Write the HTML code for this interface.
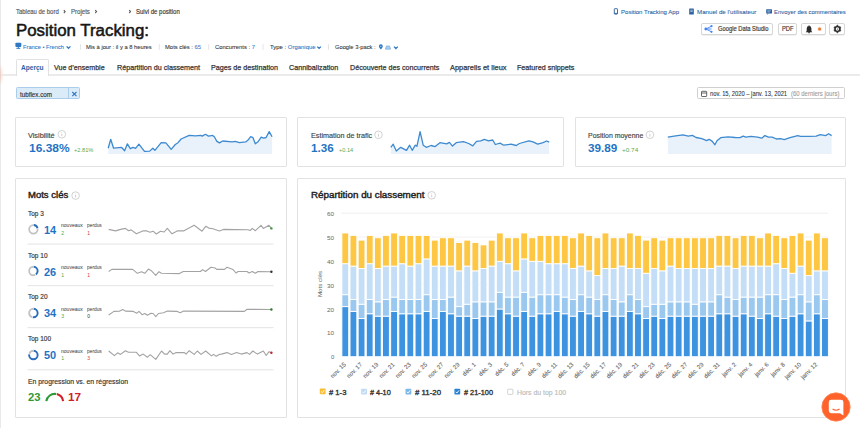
<!DOCTYPE html>
<html><head><meta charset="utf-8"><style>
html,body{margin:0;padding:0;background:#fff;}
#root{position:relative;width:860px;height:428px;overflow:hidden;background:#fff;font-family:"Liberation Sans", sans-serif;}
.t{position:absolute;white-space:nowrap;line-height:1;transform-origin:0 0;}
.box{position:absolute;box-sizing:border-box;}
svg{position:absolute;left:0;top:0;}
svg text{font-family:"Liberation Sans", sans-serif;}
</style></head><body><div id="root">
<div class="box" style="left:0;top:0;width:1.3px;height:428px;background:#e9e9e9"></div><div class="box" style="left:-4px;top:64px;width:8px;height:22px;border-radius:50%;background:radial-gradient(closest-side,rgba(240,150,120,0.35),rgba(240,150,120,0))"></div>
<div class="box" style="left:1.3px;top:74.2px;width:860px;height:1.8px;background:#ebebeb"></div>
<div class="box" style="left:15.5px;top:59.3px;width:33px;height:16.5px;background:#fff;border:1px solid #e2e2e2;border-bottom:none;border-radius:2px 2px 0 0"></div>
<div class="box" style="left:700.5px;top:22.8px;width:72.6px;height:12.4px;border:1px solid #d6d6d6;border-radius:2px;background:#fff;box-shadow:0 0.6px 0 #e2e2e2"></div>
<div class="box" style="left:777.5px;top:22.8px;width:19.2px;height:12.4px;border:1px solid #d6d6d6;border-radius:2px;background:#fff;box-shadow:0 0.6px 0 #e2e2e2"></div>
<div class="box" style="left:801px;top:22.8px;width:24.6px;height:12.4px;border:1px solid #d6d6d6;border-radius:2px;background:#fff;box-shadow:0 0.6px 0 #e2e2e2"></div>
<div class="box" style="left:829.3px;top:22.8px;width:16.2px;height:12.4px;border:1px solid #d6d6d6;border-radius:2px;background:#fff;box-shadow:0 0.6px 0 #e2e2e2"></div>
<div class="box" style="left:16px;top:87.4px;width:64px;height:12.1px;border:1px solid #a9cdea;border-radius:1.5px;background:#dcebf8"></div>
<div class="box" style="left:68px;top:87.4px;width:1px;height:12.1px;background:#a9cdea"></div>
<div class="box" style="left:697.4px;top:87.4px;width:147.9px;height:12.1px;border:1px solid #cfcfcf;border-radius:1.5px;background:#fff"></div>
<div class="box" style="left:14.75px;top:117.15px;width:271.8px;height:50.3px;border:1.3px solid #e2e2e2;border-radius:1px"></div>
<div class="box" style="left:297.25px;top:117.15px;width:266.4px;height:50.3px;border:1.3px solid #e2e2e2;border-radius:1px"></div>
<div class="box" style="left:574.55px;top:117.15px;width:271.3px;height:50.3px;border:1.3px solid #e2e2e2;border-radius:1px"></div>
<div class="box" style="left:14.75px;top:178.25px;width:271.8px;height:239.7px;border:1.3px solid #e2e2e2;border-radius:1px"></div>
<div class="box" style="left:297.25px;top:178.25px;width:548.6px;height:239.7px;border:1.3px solid #e2e2e2;border-radius:1px"></div>
<svg width="860" height="428" viewBox="0 0 860 428">
<path d="M63.8,10.1 L65.14999999999999,11.6 L63.8,13.1" fill="none" stroke="#555" stroke-width="1.05"/>
<path d="M95.2,10.1 L96.55,11.6 L95.2,13.1" fill="none" stroke="#555" stroke-width="1.05"/>
<path d="M129.2,10.1 L130.54999999999998,11.6 L129.2,13.1" fill="none" stroke="#555" stroke-width="1.05"/>
<rect x="15.4" y="42.7" width="5.9" height="4.3" rx="0.9" fill="#2f78c4"/><path d="M16.4,48.3 h3.9" stroke="#2f78c4" stroke-width="1"/><path d="M18.35,46.8 v1.4" stroke="#2f78c4" stroke-width="0.9"/>
<path d="M66.6,46.4 L68.5,48.3 L70.39999999999999,46.4" fill="none" stroke="#2f78c4" stroke-width="1.3"/>
<line x1="80.5" y1="44.2" x2="80.5" y2="49.8" stroke="#ddd" stroke-width="0.8"/>
<line x1="159.3" y1="44.2" x2="159.3" y2="49.8" stroke="#ddd" stroke-width="0.8"/>
<line x1="208.7" y1="44.2" x2="208.7" y2="49.8" stroke="#ddd" stroke-width="0.8"/>
<line x1="263" y1="44.2" x2="263" y2="49.8" stroke="#ddd" stroke-width="0.8"/>
<line x1="328.5" y1="44.2" x2="328.5" y2="49.8" stroke="#ddd" stroke-width="0.8"/>
<path d="M317.3,46.6 L319.1,48.4 L320.90000000000003,46.6" fill="none" stroke="#2f78c4" stroke-width="1.3"/>
<path d="M380.85,49.6 C379,47.4 378.9,46.7 378.9,46.3 A1.95,1.95 0 1 1 382.8,46.3 C382.8,46.7 382.7,47.4 380.85,49.6 Z" fill="#2f78c4"/><circle cx="380.85" cy="46.3" r="0.6" fill="#cfe3f7"/>
<path d="M385.3,49.2 L386.4,45.9 H389.5 L390.6,49.2 Z" fill="#a9cdef" stroke="#5b9ad6" stroke-width="0.5"/>
<path d="M394,46.6 L395.9,48.5 L397.8,46.6" fill="none" stroke="#2f78c4" stroke-width="1.3"/>
<rect x="614.3" y="8.7" width="3.2" height="5.4" rx="0.5" fill="none" stroke="#2a619f" stroke-width="0.9"/><path d="M614.3,13.4 h3.2" stroke="#2a619f" stroke-width="0.9"/>
<rect x="689.2" y="8.6" width="4.6" height="5.8" rx="0.5" fill="#2a619f"/><path d="M690.3,10.2 h2.4 M690.3,11.6 h2.4" stroke="#fff" stroke-width="0.6"/>
<rect x="766.2" y="9.2" width="5.8" height="4.4" rx="0.5" fill="#2a619f"/><path d="M767.2,13.4 l0,1.4 l1.5,-1.4z" fill="#2a619f"/><path d="M767.3,10.8 h3.6 M767.3,12 h2.6" stroke="#fff" stroke-width="0.5"/>
<circle cx="705.8" cy="29" r="1.4" fill="#4285f4"/><circle cx="711.5" cy="26.2" r="1.1" fill="#4285f4"/><circle cx="711.5" cy="31.8" r="1.1" fill="#4285f4"/><path d="M705.8,29 L711.5,26.2 M705.8,29 L711.5,31.8 M705.8,29 H711.5" stroke="#4285f4" stroke-width="0.9"/>
<path d="M805.8,32.2 L806.7,31 V28.4 A2.35,2.35 0 0 1 811.4,28.4 V31 L812.3,32.2 Z" fill="#2b2b2b"/><circle cx="809.05" cy="25.8" r="0.55" fill="#2b2b2b"/><circle cx="809.05" cy="32.6" r="0.8" fill="#2b2b2b"/><circle cx="819.6" cy="29" r="2.2" fill="#fbe3d3"/><circle cx="819.6" cy="29" r="1.5" fill="#e8762f"/>
<path d="M837.40,25.10 L838.85,26.49 L840.78,27.05 L840.30,29.00 L840.78,30.95 L838.85,31.51 L837.40,32.90 L835.95,31.51 L834.02,30.95 L834.50,29.00 L834.02,27.05 L835.95,26.49 Z" fill="#2b2b2b" stroke="#2b2b2b" stroke-width="0.6" stroke-linejoin="round"/><circle cx="837.4" cy="29" r="1.65" fill="#fff"/><circle cx="837.4" cy="29" r="0.6" fill="#2b2b2b"/>
<path d="M72.3,92 L76.5,96.2 M76.5,92 L72.3,96.2" stroke="#2f78c4" stroke-width="1.1"/>
<rect x="701.5" y="91.3" width="5.2" height="5.2" rx="0.6" fill="none" stroke="#555" stroke-width="0.9"/><path d="M701.5,93 h5.2" stroke="#555" stroke-width="0.9"/>
<circle cx="61.8" cy="134.3" r="3.8" fill="none" stroke="#c6c6c6" stroke-width="0.8"/><path d="M61.8,133.70000000000002 V136.20000000000002" stroke="#bbb" stroke-width="0.7"/><circle cx="61.8" cy="132.60000000000002" r="0.4" fill="#bbb"/>
<circle cx="378.5" cy="134.8" r="3.8" fill="none" stroke="#c6c6c6" stroke-width="0.8"/><path d="M378.5,134.20000000000002 V136.70000000000002" stroke="#bbb" stroke-width="0.7"/><circle cx="378.5" cy="133.10000000000002" r="0.4" fill="#bbb"/>
<circle cx="649.9" cy="134.8" r="3.8" fill="none" stroke="#c6c6c6" stroke-width="0.8"/><path d="M649.9,134.20000000000002 V136.70000000000002" stroke="#bbb" stroke-width="0.7"/><circle cx="649.9" cy="133.10000000000002" r="0.4" fill="#bbb"/>
<circle cx="75.6" cy="195.6" r="3.8" fill="none" stroke="#c6c6c6" stroke-width="0.8"/><path d="M75.6,195.0 V197.5" stroke="#bbb" stroke-width="0.7"/><circle cx="75.6" cy="193.9" r="0.4" fill="#bbb"/>
<circle cx="431.7" cy="195.3" r="3.8" fill="none" stroke="#c6c6c6" stroke-width="0.8"/><path d="M431.7,194.70000000000002 V197.20000000000002" stroke="#bbb" stroke-width="0.7"/><circle cx="431.7" cy="193.60000000000002" r="0.4" fill="#bbb"/>
<path d="M108.2,148.2 L110.7,139.3 L113.6,148.2 L121.5,147.3 L124.6,150.8 L127.4,143.8 L130.3,148.7 L133.0,147.3 L135.6,148.4 L138.9,144.2 L144.5,151.3 L149.7,151.1 L152.8,148.2 L154.9,150.3 L161.2,142.7 L165.9,142.9 L171.2,149.4 L175.3,144.5 L178.0,142.7 L181.1,139.0 L189.2,135.4 L195.5,135.8 L200.7,135.4 L202.3,136.1 L205.4,134.3 L208.5,136.1 L212.7,135.4 L214.3,136.7 L216.9,141.4 L219.5,142.9 L222.7,141.0 L232.1,141.9 L235.2,141.4 L239.4,142.7 L245.7,141.9 L247.8,140.3 L250.7,136.7 L253.0,137.7 L255.3,143.8 L258.3,141.4 L261.2,137.2 L263.5,138.2 L266.1,137.5 L269.2,131.6 L272.1,136.7 L272.1,153.9 L108.2,153.9 Z" fill="#e9f2fb"/><path d="M108.2,148.2 L110.7,139.3 L113.6,148.2 L121.5,147.3 L124.6,150.8 L127.4,143.8 L130.3,148.7 L133.0,147.3 L135.6,148.4 L138.9,144.2 L144.5,151.3 L149.7,151.1 L152.8,148.2 L154.9,150.3 L161.2,142.7 L165.9,142.9 L171.2,149.4 L175.3,144.5 L178.0,142.7 L181.1,139.0 L189.2,135.4 L195.5,135.8 L200.7,135.4 L202.3,136.1 L205.4,134.3 L208.5,136.1 L212.7,135.4 L214.3,136.7 L216.9,141.4 L219.5,142.9 L222.7,141.0 L232.1,141.9 L235.2,141.4 L239.4,142.7 L245.7,141.9 L247.8,140.3 L250.7,136.7 L253.0,137.7 L255.3,143.8 L258.3,141.4 L261.2,137.2 L263.5,138.2 L266.1,137.5 L269.2,131.6 L272.1,136.7" fill="none" stroke="#3d8ad0" stroke-width="1.3" stroke-linejoin="round"/>
<path d="M390.8,147.3 L393.2,144.2 L396.3,151.1 L400.7,147.3 L406.5,150.3 L409.6,145.2 L412.2,150.3 L415.3,145.2 L416.9,146.3 L420.1,131.6 L423.2,145.2 L426.3,147.3 L431.0,145.5 L435.2,146.6 L439.9,142.7 L446.7,143.8 L449.4,142.4 L452.5,146.1 L456.2,142.7 L463.5,141.7 L468.7,143.5 L472.8,145.9 L476.5,141.4 L480.7,140.8 L484.4,139.3 L488.5,140.8 L492.7,140.0 L495.3,144.5 L500.1,143.1 L503.7,145.2 L511.0,144.2 L516.3,145.5 L519.4,143.5 L528.8,140.8 L533.0,141.9 L537.7,144.2 L543.0,142.7 L546.6,141.0 L549.2,142.1 L549.2,153.9 L390.8,153.9 Z" fill="#e9f2fb"/><path d="M390.8,147.3 L393.2,144.2 L396.3,151.1 L400.7,147.3 L406.5,150.3 L409.6,145.2 L412.2,150.3 L415.3,145.2 L416.9,146.3 L420.1,131.6 L423.2,145.2 L426.3,147.3 L431.0,145.5 L435.2,146.6 L439.9,142.7 L446.7,143.8 L449.4,142.4 L452.5,146.1 L456.2,142.7 L463.5,141.7 L468.7,143.5 L472.8,145.9 L476.5,141.4 L480.7,140.8 L484.4,139.3 L488.5,140.8 L492.7,140.0 L495.3,144.5 L500.1,143.1 L503.7,145.2 L511.0,144.2 L516.3,145.5 L519.4,143.5 L528.8,140.8 L533.0,141.9 L537.7,144.2 L543.0,142.7 L546.6,141.0 L549.2,142.1" fill="none" stroke="#3d8ad0" stroke-width="1.3" stroke-linejoin="round"/>
<path d="M667.8,137.2 L675.7,135.8 L683.0,134.8 L688.3,136.1 L692.4,135.4 L696.1,137.5 L701.9,138.7 L706.6,140.6 L709.2,139.3 L712.3,141.4 L714.9,144.8 L717.0,140.8 L720.7,137.7 L728.0,136.9 L735.3,137.5 L740.0,137.7 L743.2,136.1 L745.8,137.2 L750.8,136.4 L757.6,137.2 L761.7,138.2 L764.9,135.6 L768.5,137.2 L772.2,137.2 L776.4,139.0 L780.6,138.7 L784.2,139.6 L790.0,137.7 L797.8,135.6 L800.5,136.4 L808.8,136.4 L816.2,136.1 L820.3,134.6 L825.6,135.6 L828.7,133.7 L831.6,135.6 L831.6,153.9 L667.8,153.9 Z" fill="#e9f2fb"/><path d="M667.8,137.2 L675.7,135.8 L683.0,134.8 L688.3,136.1 L692.4,135.4 L696.1,137.5 L701.9,138.7 L706.6,140.6 L709.2,139.3 L712.3,141.4 L714.9,144.8 L717.0,140.8 L720.7,137.7 L728.0,136.9 L735.3,137.5 L740.0,137.7 L743.2,136.1 L745.8,137.2 L750.8,136.4 L757.6,137.2 L761.7,138.2 L764.9,135.6 L768.5,137.2 L772.2,137.2 L776.4,139.0 L780.6,138.7 L784.2,139.6 L790.0,137.7 L797.8,135.6 L800.5,136.4 L808.8,136.4 L816.2,136.1 L820.3,134.6 L825.6,135.6 L828.7,133.7 L831.6,135.6" fill="none" stroke="#3d8ad0" stroke-width="1.3" stroke-linejoin="round"/>
<rect x="27.5" y="243.5" width="246" height="1.2" fill="#e8e8e8"/>
<rect x="27.5" y="285.0" width="246" height="1.2" fill="#e8e8e8"/>
<rect x="27.5" y="327.0" width="246" height="1.2" fill="#e8e8e8"/>
<rect x="27.5" y="369.2" width="246" height="1.2" fill="#e8e8e8"/>
<path d="M108.7,229.4 L115.5,230.9 L120.7,229.4 L125.4,228.4 L128.5,230.7 L131.2,229.9 L136.4,233.8 L142.7,230.9 L146.9,230.9 L150.0,232.3 L153.1,231.2 L156.3,234.0 L160.5,231.2 L164.1,232.0 L167.3,228.4 L172.0,233.8 L177.2,230.9 L183.5,230.9 L190.0,227.6 L194.2,225.3 L202.0,231.2 L205.7,226.3 L208.8,228.1 L213.0,228.8 L219.3,230.9 L223.5,229.4 L248.1,229.7 L250.2,230.5 L252.3,228.4 L255.4,230.7 L261.0,225.3 L263.3,228.4 L269.0,225.3 L271.4,228.4" fill="none" stroke="#a3a3a3" stroke-width="1.1" stroke-linejoin="round"/><circle cx="271.4" cy="228.4" r="1.2" fill="#3c9a3c"/>
<path d="M108.7,271.5 L111.8,269.4 L132.7,269.4 L137.4,273.3 L141.6,271.7 L144.8,273.3 L148.4,269.1 L151.0,270.4 L155.8,275.4 L158.9,271.7 L161.5,273.3 L179.3,273.6 L183.3,271.5 L200.5,271.5 L202.6,269.6 L205.5,271.5 L210.9,267.3 L215.1,268.0 L216.7,269.4 L224.5,269.4 L227.1,267.3 L232.9,269.4 L236.0,273.0 L238.1,271.5 L247.0,271.5 L249.1,273.0 L252.3,271.5 L255.4,273.3 L258.0,271.5 L271.4,271.7" fill="none" stroke="#a3a3a3" stroke-width="1.1" stroke-linejoin="round"/><circle cx="271.4" cy="271.7" r="1.2" fill="#333"/>
<path d="M108.7,315.0 L113.9,311.4 L119.7,311.1 L122.8,309.5 L125.4,311.1 L133.3,311.4 L136.9,313.2 L139.0,311.4 L142.1,314.7 L144.8,313.5 L147.4,315.3 L151.0,313.2 L153.1,313.5 L155.8,316.6 L158.4,313.5 L163.6,312.7 L167.3,311.1 L177.2,311.4 L180.3,312.7 L183.5,311.1 L244.4,311.4 L247.0,309.3 L271.4,309.5" fill="none" stroke="#a3a3a3" stroke-width="1.1" stroke-linejoin="round"/><circle cx="271.4" cy="309.5" r="1.2" fill="#2a7a2a"/>
<path d="M108.7,351.0 L114.4,355.7 L117.6,352.8 L120.5,354.4 L125.4,350.7 L128.5,352.3 L136.4,352.3 L139.5,355.9 L143.2,354.1 L147.4,357.3 L150.2,354.7 L155.8,359.4 L161.5,351.0 L164.6,354.1 L167.3,354.1 L169.9,350.7 L173.0,354.1 L176.2,352.6 L184.5,352.6 L186.1,354.1 L189.2,350.7 L194.2,354.4 L197.3,351.0 L201.0,354.4 L205.7,351.0 L211.5,355.9 L213.5,354.4 L216.2,356.2 L219.3,354.4 L221.4,354.1 L227.1,352.6 L231.3,354.4 L236.6,352.6 L241.3,354.1 L247.0,352.6 L249.6,354.4 L252.8,351.0 L257.5,354.1 L263.3,351.0 L266.2,355.5 L269.0,351.7 L271.4,352.8" fill="none" stroke="#a3a3a3" stroke-width="1.1" stroke-linejoin="round"/><circle cx="271.4" cy="352.8" r="1.2" fill="#c8242b"/>
<circle cx="33.4" cy="229.3" r="4.25" fill="none" stroke="#c2c2c2" stroke-width="1.8" stroke-dasharray="0 6.10 20.25 26.70" transform="rotate(-90 33.4 229.3)"/><circle cx="33.4" cy="229.3" r="4.25" fill="none" stroke="#2a6fbb" stroke-width="1.9" stroke-dasharray="0 0.35 5.05 26.70" transform="rotate(-90 33.4 229.3)"/>
<circle cx="33.4" cy="271" r="4.25" fill="none" stroke="#c2c2c2" stroke-width="1.8" stroke-dasharray="0 11.03 15.32 26.70" transform="rotate(-90 33.4 271)"/><circle cx="33.4" cy="271" r="4.25" fill="none" stroke="#2a6fbb" stroke-width="1.9" stroke-dasharray="0 0.35 9.98 26.70" transform="rotate(-90 33.4 271)"/>
<circle cx="33.4" cy="313" r="4.25" fill="none" stroke="#c2c2c2" stroke-width="1.8" stroke-dasharray="0 14.32 12.04 26.70" transform="rotate(-90 33.4 313)"/><circle cx="33.4" cy="313" r="4.25" fill="none" stroke="#2a6fbb" stroke-width="1.9" stroke-dasharray="0 0.35 13.27 26.70" transform="rotate(-90 33.4 313)"/>
<circle cx="33.4" cy="355" r="4.25" fill="none" stroke="#c2c2c2" stroke-width="1.8" stroke-dasharray="0 20.89 5.46 26.70" transform="rotate(-90 33.4 355)"/><circle cx="33.4" cy="355" r="4.25" fill="none" stroke="#2a6fbb" stroke-width="1.9" stroke-dasharray="0 0.35 19.84 26.70" transform="rotate(-90 33.4 355)"/>
<path d="M46.3,401.2 A8.52,8.52 0 0 1 56.2,394.0" fill="none" stroke="#2e9a35" stroke-width="2.1"/><path d="M56.9,394.1 A8.52,8.52 0 0 1 63.1,401.2" fill="none" stroke="#d0212a" stroke-width="2.1"/>
<line x1="341" y1="332.45" x2="828" y2="332.45" stroke="#ececec" stroke-width="0.8"/>
<line x1="341" y1="308.60" x2="828" y2="308.60" stroke="#ececec" stroke-width="0.8"/>
<line x1="341" y1="284.75" x2="828" y2="284.75" stroke="#ececec" stroke-width="0.8"/>
<line x1="341" y1="260.90" x2="828" y2="260.90" stroke="#ececec" stroke-width="0.8"/>
<line x1="341" y1="237.05" x2="828" y2="237.05" stroke="#ececec" stroke-width="0.8"/>
<line x1="341" y1="213.20" x2="828" y2="213.20" stroke="#ececec" stroke-width="0.8"/>
<rect x="341.90" y="306.62" width="6.8" height="50.08" fill="#3d93e0" stroke="#fff" stroke-width="0.9"/>
<rect x="341.90" y="294.69" width="6.8" height="11.93" fill="#9ac8ef" stroke="#fff" stroke-width="0.9"/>
<rect x="341.90" y="263.69" width="6.8" height="31.00" fill="#c3def6" stroke="#fff" stroke-width="0.9"/>
<rect x="341.90" y="232.98" width="6.8" height="30.70" fill="#fdc643" stroke="#fff" stroke-width="0.9"/>
<rect x="350.03" y="311.38" width="6.8" height="45.31" fill="#3d93e0" stroke="#fff" stroke-width="0.9"/>
<rect x="350.03" y="299.46" width="6.8" height="11.93" fill="#9ac8ef" stroke="#fff" stroke-width="0.9"/>
<rect x="350.03" y="266.07" width="6.8" height="33.39" fill="#c3def6" stroke="#fff" stroke-width="0.9"/>
<rect x="350.03" y="235.37" width="6.8" height="30.70" fill="#fdc643" stroke="#fff" stroke-width="0.9"/>
<rect x="358.16" y="318.54" width="6.8" height="38.16" fill="#3d93e0" stroke="#fff" stroke-width="0.9"/>
<rect x="358.16" y="304.23" width="6.8" height="14.31" fill="#9ac8ef" stroke="#fff" stroke-width="0.9"/>
<rect x="358.16" y="268.45" width="6.8" height="35.78" fill="#c3def6" stroke="#fff" stroke-width="0.9"/>
<rect x="358.16" y="240.13" width="6.8" height="28.32" fill="#fdc643" stroke="#fff" stroke-width="0.9"/>
<rect x="366.29" y="313.77" width="6.8" height="42.93" fill="#3d93e0" stroke="#fff" stroke-width="0.9"/>
<rect x="366.29" y="299.46" width="6.8" height="14.31" fill="#9ac8ef" stroke="#fff" stroke-width="0.9"/>
<rect x="366.29" y="263.69" width="6.8" height="35.77" fill="#c3def6" stroke="#fff" stroke-width="0.9"/>
<rect x="366.29" y="235.37" width="6.8" height="28.32" fill="#fdc643" stroke="#fff" stroke-width="0.9"/>
<rect x="374.42" y="316.15" width="6.8" height="40.55" fill="#3d93e0" stroke="#fff" stroke-width="0.9"/>
<rect x="374.42" y="301.84" width="6.8" height="14.31" fill="#9ac8ef" stroke="#fff" stroke-width="0.9"/>
<rect x="374.42" y="268.45" width="6.8" height="33.39" fill="#c3def6" stroke="#fff" stroke-width="0.9"/>
<rect x="374.42" y="237.75" width="6.8" height="30.70" fill="#fdc643" stroke="#fff" stroke-width="0.9"/>
<rect x="382.55" y="316.15" width="6.8" height="40.55" fill="#3d93e0" stroke="#fff" stroke-width="0.9"/>
<rect x="382.55" y="299.46" width="6.8" height="16.69" fill="#9ac8ef" stroke="#fff" stroke-width="0.9"/>
<rect x="382.55" y="266.07" width="6.8" height="33.39" fill="#c3def6" stroke="#fff" stroke-width="0.9"/>
<rect x="382.55" y="235.37" width="6.8" height="30.70" fill="#fdc643" stroke="#fff" stroke-width="0.9"/>
<rect x="390.68" y="311.38" width="6.8" height="45.31" fill="#3d93e0" stroke="#fff" stroke-width="0.9"/>
<rect x="390.68" y="297.07" width="6.8" height="14.31" fill="#9ac8ef" stroke="#fff" stroke-width="0.9"/>
<rect x="390.68" y="266.07" width="6.8" height="31.00" fill="#c3def6" stroke="#fff" stroke-width="0.9"/>
<rect x="390.68" y="232.98" width="6.8" height="33.09" fill="#fdc643" stroke="#fff" stroke-width="0.9"/>
<rect x="398.81" y="313.77" width="6.8" height="42.93" fill="#3d93e0" stroke="#fff" stroke-width="0.9"/>
<rect x="398.81" y="299.46" width="6.8" height="14.31" fill="#9ac8ef" stroke="#fff" stroke-width="0.9"/>
<rect x="398.81" y="263.69" width="6.8" height="35.77" fill="#c3def6" stroke="#fff" stroke-width="0.9"/>
<rect x="398.81" y="235.37" width="6.8" height="28.32" fill="#fdc643" stroke="#fff" stroke-width="0.9"/>
<rect x="406.94" y="313.77" width="6.8" height="42.93" fill="#3d93e0" stroke="#fff" stroke-width="0.9"/>
<rect x="406.94" y="299.46" width="6.8" height="14.31" fill="#9ac8ef" stroke="#fff" stroke-width="0.9"/>
<rect x="406.94" y="266.07" width="6.8" height="33.39" fill="#c3def6" stroke="#fff" stroke-width="0.9"/>
<rect x="406.94" y="235.37" width="6.8" height="30.70" fill="#fdc643" stroke="#fff" stroke-width="0.9"/>
<rect x="415.07" y="313.77" width="6.8" height="42.93" fill="#3d93e0" stroke="#fff" stroke-width="0.9"/>
<rect x="415.07" y="299.46" width="6.8" height="14.31" fill="#9ac8ef" stroke="#fff" stroke-width="0.9"/>
<rect x="415.07" y="263.69" width="6.8" height="35.77" fill="#c3def6" stroke="#fff" stroke-width="0.9"/>
<rect x="415.07" y="235.37" width="6.8" height="28.32" fill="#fdc643" stroke="#fff" stroke-width="0.9"/>
<rect x="423.20" y="311.38" width="6.8" height="45.31" fill="#3d93e0" stroke="#fff" stroke-width="0.9"/>
<rect x="423.20" y="294.69" width="6.8" height="16.69" fill="#9ac8ef" stroke="#fff" stroke-width="0.9"/>
<rect x="423.20" y="258.91" width="6.8" height="35.78" fill="#c3def6" stroke="#fff" stroke-width="0.9"/>
<rect x="423.20" y="235.37" width="6.8" height="23.55" fill="#fdc643" stroke="#fff" stroke-width="0.9"/>
<rect x="431.33" y="318.54" width="6.8" height="38.16" fill="#3d93e0" stroke="#fff" stroke-width="0.9"/>
<rect x="431.33" y="299.46" width="6.8" height="19.08" fill="#9ac8ef" stroke="#fff" stroke-width="0.9"/>
<rect x="431.33" y="266.07" width="6.8" height="33.39" fill="#c3def6" stroke="#fff" stroke-width="0.9"/>
<rect x="431.33" y="240.13" width="6.8" height="25.94" fill="#fdc643" stroke="#fff" stroke-width="0.9"/>
<rect x="439.46" y="311.38" width="6.8" height="45.31" fill="#3d93e0" stroke="#fff" stroke-width="0.9"/>
<rect x="439.46" y="299.46" width="6.8" height="11.93" fill="#9ac8ef" stroke="#fff" stroke-width="0.9"/>
<rect x="439.46" y="266.07" width="6.8" height="33.39" fill="#c3def6" stroke="#fff" stroke-width="0.9"/>
<rect x="439.46" y="237.75" width="6.8" height="28.32" fill="#fdc643" stroke="#fff" stroke-width="0.9"/>
<rect x="447.59" y="313.77" width="6.8" height="42.93" fill="#3d93e0" stroke="#fff" stroke-width="0.9"/>
<rect x="447.59" y="297.07" width="6.8" height="16.69" fill="#9ac8ef" stroke="#fff" stroke-width="0.9"/>
<rect x="447.59" y="266.07" width="6.8" height="31.00" fill="#c3def6" stroke="#fff" stroke-width="0.9"/>
<rect x="447.59" y="237.75" width="6.8" height="28.32" fill="#fdc643" stroke="#fff" stroke-width="0.9"/>
<rect x="455.72" y="316.15" width="6.8" height="40.55" fill="#3d93e0" stroke="#fff" stroke-width="0.9"/>
<rect x="455.72" y="306.62" width="6.8" height="9.54" fill="#9ac8ef" stroke="#fff" stroke-width="0.9"/>
<rect x="455.72" y="270.84" width="6.8" height="35.77" fill="#c3def6" stroke="#fff" stroke-width="0.9"/>
<rect x="455.72" y="242.52" width="6.8" height="28.32" fill="#fdc643" stroke="#fff" stroke-width="0.9"/>
<rect x="463.85" y="316.15" width="6.8" height="40.55" fill="#3d93e0" stroke="#fff" stroke-width="0.9"/>
<rect x="463.85" y="304.23" width="6.8" height="11.92" fill="#9ac8ef" stroke="#fff" stroke-width="0.9"/>
<rect x="463.85" y="266.07" width="6.8" height="38.16" fill="#c3def6" stroke="#fff" stroke-width="0.9"/>
<rect x="463.85" y="240.13" width="6.8" height="25.94" fill="#fdc643" stroke="#fff" stroke-width="0.9"/>
<rect x="471.98" y="318.54" width="6.8" height="38.16" fill="#3d93e0" stroke="#fff" stroke-width="0.9"/>
<rect x="471.98" y="301.84" width="6.8" height="16.69" fill="#9ac8ef" stroke="#fff" stroke-width="0.9"/>
<rect x="471.98" y="270.84" width="6.8" height="31.00" fill="#c3def6" stroke="#fff" stroke-width="0.9"/>
<rect x="471.98" y="242.52" width="6.8" height="28.32" fill="#fdc643" stroke="#fff" stroke-width="0.9"/>
<rect x="480.11" y="316.15" width="6.8" height="40.55" fill="#3d93e0" stroke="#fff" stroke-width="0.9"/>
<rect x="480.11" y="301.84" width="6.8" height="14.31" fill="#9ac8ef" stroke="#fff" stroke-width="0.9"/>
<rect x="480.11" y="268.45" width="6.8" height="33.39" fill="#c3def6" stroke="#fff" stroke-width="0.9"/>
<rect x="480.11" y="244.91" width="6.8" height="23.55" fill="#fdc643" stroke="#fff" stroke-width="0.9"/>
<rect x="488.24" y="316.15" width="6.8" height="40.55" fill="#3d93e0" stroke="#fff" stroke-width="0.9"/>
<rect x="488.24" y="301.84" width="6.8" height="14.31" fill="#9ac8ef" stroke="#fff" stroke-width="0.9"/>
<rect x="488.24" y="266.07" width="6.8" height="35.77" fill="#c3def6" stroke="#fff" stroke-width="0.9"/>
<rect x="488.24" y="240.13" width="6.8" height="25.94" fill="#fdc643" stroke="#fff" stroke-width="0.9"/>
<rect x="496.37" y="309.00" width="6.8" height="47.70" fill="#3d93e0" stroke="#fff" stroke-width="0.9"/>
<rect x="496.37" y="292.31" width="6.8" height="16.69" fill="#9ac8ef" stroke="#fff" stroke-width="0.9"/>
<rect x="496.37" y="261.30" width="6.8" height="31.00" fill="#c3def6" stroke="#fff" stroke-width="0.9"/>
<rect x="496.37" y="232.98" width="6.8" height="28.32" fill="#fdc643" stroke="#fff" stroke-width="0.9"/>
<rect x="504.50" y="313.77" width="6.8" height="42.93" fill="#3d93e0" stroke="#fff" stroke-width="0.9"/>
<rect x="504.50" y="297.07" width="6.8" height="16.69" fill="#9ac8ef" stroke="#fff" stroke-width="0.9"/>
<rect x="504.50" y="263.69" width="6.8" height="33.39" fill="#c3def6" stroke="#fff" stroke-width="0.9"/>
<rect x="504.50" y="237.75" width="6.8" height="25.94" fill="#fdc643" stroke="#fff" stroke-width="0.9"/>
<rect x="512.63" y="316.15" width="6.8" height="40.55" fill="#3d93e0" stroke="#fff" stroke-width="0.9"/>
<rect x="512.63" y="297.07" width="6.8" height="19.08" fill="#9ac8ef" stroke="#fff" stroke-width="0.9"/>
<rect x="512.63" y="270.84" width="6.8" height="26.23" fill="#c3def6" stroke="#fff" stroke-width="0.9"/>
<rect x="512.63" y="237.75" width="6.8" height="33.09" fill="#fdc643" stroke="#fff" stroke-width="0.9"/>
<rect x="520.76" y="311.38" width="6.8" height="45.31" fill="#3d93e0" stroke="#fff" stroke-width="0.9"/>
<rect x="520.76" y="292.31" width="6.8" height="19.08" fill="#9ac8ef" stroke="#fff" stroke-width="0.9"/>
<rect x="520.76" y="258.91" width="6.8" height="33.39" fill="#c3def6" stroke="#fff" stroke-width="0.9"/>
<rect x="520.76" y="232.98" width="6.8" height="25.93" fill="#fdc643" stroke="#fff" stroke-width="0.9"/>
<rect x="528.89" y="316.15" width="6.8" height="40.55" fill="#3d93e0" stroke="#fff" stroke-width="0.9"/>
<rect x="528.89" y="297.07" width="6.8" height="19.08" fill="#9ac8ef" stroke="#fff" stroke-width="0.9"/>
<rect x="528.89" y="261.30" width="6.8" height="35.77" fill="#c3def6" stroke="#fff" stroke-width="0.9"/>
<rect x="528.89" y="237.75" width="6.8" height="23.55" fill="#fdc643" stroke="#fff" stroke-width="0.9"/>
<rect x="537.02" y="313.77" width="6.8" height="42.93" fill="#3d93e0" stroke="#fff" stroke-width="0.9"/>
<rect x="537.02" y="294.69" width="6.8" height="19.08" fill="#9ac8ef" stroke="#fff" stroke-width="0.9"/>
<rect x="537.02" y="261.30" width="6.8" height="33.39" fill="#c3def6" stroke="#fff" stroke-width="0.9"/>
<rect x="537.02" y="235.37" width="6.8" height="25.94" fill="#fdc643" stroke="#fff" stroke-width="0.9"/>
<rect x="545.15" y="313.77" width="6.8" height="42.93" fill="#3d93e0" stroke="#fff" stroke-width="0.9"/>
<rect x="545.15" y="294.69" width="6.8" height="19.08" fill="#9ac8ef" stroke="#fff" stroke-width="0.9"/>
<rect x="545.15" y="263.69" width="6.8" height="31.00" fill="#c3def6" stroke="#fff" stroke-width="0.9"/>
<rect x="545.15" y="235.37" width="6.8" height="28.32" fill="#fdc643" stroke="#fff" stroke-width="0.9"/>
<rect x="553.28" y="311.38" width="6.8" height="45.31" fill="#3d93e0" stroke="#fff" stroke-width="0.9"/>
<rect x="553.28" y="294.69" width="6.8" height="16.69" fill="#9ac8ef" stroke="#fff" stroke-width="0.9"/>
<rect x="553.28" y="263.69" width="6.8" height="31.00" fill="#c3def6" stroke="#fff" stroke-width="0.9"/>
<rect x="553.28" y="235.37" width="6.8" height="28.32" fill="#fdc643" stroke="#fff" stroke-width="0.9"/>
<rect x="561.41" y="313.77" width="6.8" height="42.93" fill="#3d93e0" stroke="#fff" stroke-width="0.9"/>
<rect x="561.41" y="297.07" width="6.8" height="16.69" fill="#9ac8ef" stroke="#fff" stroke-width="0.9"/>
<rect x="561.41" y="263.69" width="6.8" height="33.39" fill="#c3def6" stroke="#fff" stroke-width="0.9"/>
<rect x="561.41" y="235.37" width="6.8" height="28.32" fill="#fdc643" stroke="#fff" stroke-width="0.9"/>
<rect x="569.54" y="316.15" width="6.8" height="40.55" fill="#3d93e0" stroke="#fff" stroke-width="0.9"/>
<rect x="569.54" y="299.46" width="6.8" height="16.69" fill="#9ac8ef" stroke="#fff" stroke-width="0.9"/>
<rect x="569.54" y="268.45" width="6.8" height="31.00" fill="#c3def6" stroke="#fff" stroke-width="0.9"/>
<rect x="569.54" y="237.75" width="6.8" height="30.70" fill="#fdc643" stroke="#fff" stroke-width="0.9"/>
<rect x="577.67" y="311.38" width="6.8" height="45.31" fill="#3d93e0" stroke="#fff" stroke-width="0.9"/>
<rect x="577.67" y="294.69" width="6.8" height="16.69" fill="#9ac8ef" stroke="#fff" stroke-width="0.9"/>
<rect x="577.67" y="266.07" width="6.8" height="28.62" fill="#c3def6" stroke="#fff" stroke-width="0.9"/>
<rect x="577.67" y="232.98" width="6.8" height="33.09" fill="#fdc643" stroke="#fff" stroke-width="0.9"/>
<rect x="585.80" y="313.77" width="6.8" height="42.93" fill="#3d93e0" stroke="#fff" stroke-width="0.9"/>
<rect x="585.80" y="297.07" width="6.8" height="16.69" fill="#9ac8ef" stroke="#fff" stroke-width="0.9"/>
<rect x="585.80" y="270.84" width="6.8" height="26.23" fill="#c3def6" stroke="#fff" stroke-width="0.9"/>
<rect x="585.80" y="235.37" width="6.8" height="35.48" fill="#fdc643" stroke="#fff" stroke-width="0.9"/>
<rect x="593.93" y="316.15" width="6.8" height="40.55" fill="#3d93e0" stroke="#fff" stroke-width="0.9"/>
<rect x="593.93" y="299.46" width="6.8" height="16.69" fill="#9ac8ef" stroke="#fff" stroke-width="0.9"/>
<rect x="593.93" y="275.61" width="6.8" height="23.85" fill="#c3def6" stroke="#fff" stroke-width="0.9"/>
<rect x="593.93" y="237.75" width="6.8" height="37.86" fill="#fdc643" stroke="#fff" stroke-width="0.9"/>
<rect x="602.06" y="311.38" width="6.8" height="45.31" fill="#3d93e0" stroke="#fff" stroke-width="0.9"/>
<rect x="602.06" y="294.69" width="6.8" height="16.69" fill="#9ac8ef" stroke="#fff" stroke-width="0.9"/>
<rect x="602.06" y="268.45" width="6.8" height="26.24" fill="#c3def6" stroke="#fff" stroke-width="0.9"/>
<rect x="602.06" y="232.98" width="6.8" height="35.47" fill="#fdc643" stroke="#fff" stroke-width="0.9"/>
<rect x="610.19" y="316.15" width="6.8" height="40.55" fill="#3d93e0" stroke="#fff" stroke-width="0.9"/>
<rect x="610.19" y="299.46" width="6.8" height="16.69" fill="#9ac8ef" stroke="#fff" stroke-width="0.9"/>
<rect x="610.19" y="268.45" width="6.8" height="31.00" fill="#c3def6" stroke="#fff" stroke-width="0.9"/>
<rect x="610.19" y="237.75" width="6.8" height="30.70" fill="#fdc643" stroke="#fff" stroke-width="0.9"/>
<rect x="618.32" y="316.15" width="6.8" height="40.55" fill="#3d93e0" stroke="#fff" stroke-width="0.9"/>
<rect x="618.32" y="301.84" width="6.8" height="14.31" fill="#9ac8ef" stroke="#fff" stroke-width="0.9"/>
<rect x="618.32" y="266.07" width="6.8" height="35.77" fill="#c3def6" stroke="#fff" stroke-width="0.9"/>
<rect x="618.32" y="237.75" width="6.8" height="28.32" fill="#fdc643" stroke="#fff" stroke-width="0.9"/>
<rect x="626.45" y="311.38" width="6.8" height="45.31" fill="#3d93e0" stroke="#fff" stroke-width="0.9"/>
<rect x="626.45" y="294.69" width="6.8" height="16.69" fill="#9ac8ef" stroke="#fff" stroke-width="0.9"/>
<rect x="626.45" y="268.45" width="6.8" height="26.24" fill="#c3def6" stroke="#fff" stroke-width="0.9"/>
<rect x="626.45" y="232.98" width="6.8" height="35.47" fill="#fdc643" stroke="#fff" stroke-width="0.9"/>
<rect x="634.58" y="313.77" width="6.8" height="42.93" fill="#3d93e0" stroke="#fff" stroke-width="0.9"/>
<rect x="634.58" y="299.46" width="6.8" height="14.31" fill="#9ac8ef" stroke="#fff" stroke-width="0.9"/>
<rect x="634.58" y="268.45" width="6.8" height="31.00" fill="#c3def6" stroke="#fff" stroke-width="0.9"/>
<rect x="634.58" y="235.37" width="6.8" height="33.09" fill="#fdc643" stroke="#fff" stroke-width="0.9"/>
<rect x="642.71" y="318.54" width="6.8" height="38.16" fill="#3d93e0" stroke="#fff" stroke-width="0.9"/>
<rect x="642.71" y="306.62" width="6.8" height="11.92" fill="#9ac8ef" stroke="#fff" stroke-width="0.9"/>
<rect x="642.71" y="273.23" width="6.8" height="33.39" fill="#c3def6" stroke="#fff" stroke-width="0.9"/>
<rect x="642.71" y="240.13" width="6.8" height="33.09" fill="#fdc643" stroke="#fff" stroke-width="0.9"/>
<rect x="650.84" y="316.15" width="6.8" height="40.55" fill="#3d93e0" stroke="#fff" stroke-width="0.9"/>
<rect x="650.84" y="304.23" width="6.8" height="11.92" fill="#9ac8ef" stroke="#fff" stroke-width="0.9"/>
<rect x="650.84" y="268.45" width="6.8" height="35.78" fill="#c3def6" stroke="#fff" stroke-width="0.9"/>
<rect x="650.84" y="237.75" width="6.8" height="30.70" fill="#fdc643" stroke="#fff" stroke-width="0.9"/>
<rect x="658.97" y="318.54" width="6.8" height="38.16" fill="#3d93e0" stroke="#fff" stroke-width="0.9"/>
<rect x="658.97" y="304.23" width="6.8" height="14.31" fill="#9ac8ef" stroke="#fff" stroke-width="0.9"/>
<rect x="658.97" y="270.84" width="6.8" height="33.39" fill="#c3def6" stroke="#fff" stroke-width="0.9"/>
<rect x="658.97" y="240.13" width="6.8" height="30.71" fill="#fdc643" stroke="#fff" stroke-width="0.9"/>
<rect x="667.10" y="316.15" width="6.8" height="40.55" fill="#3d93e0" stroke="#fff" stroke-width="0.9"/>
<rect x="667.10" y="301.84" width="6.8" height="14.31" fill="#9ac8ef" stroke="#fff" stroke-width="0.9"/>
<rect x="667.10" y="266.07" width="6.8" height="35.77" fill="#c3def6" stroke="#fff" stroke-width="0.9"/>
<rect x="667.10" y="237.75" width="6.8" height="28.32" fill="#fdc643" stroke="#fff" stroke-width="0.9"/>
<rect x="675.23" y="316.15" width="6.8" height="40.55" fill="#3d93e0" stroke="#fff" stroke-width="0.9"/>
<rect x="675.23" y="301.84" width="6.8" height="14.31" fill="#9ac8ef" stroke="#fff" stroke-width="0.9"/>
<rect x="675.23" y="268.45" width="6.8" height="33.39" fill="#c3def6" stroke="#fff" stroke-width="0.9"/>
<rect x="675.23" y="237.75" width="6.8" height="30.70" fill="#fdc643" stroke="#fff" stroke-width="0.9"/>
<rect x="683.36" y="316.15" width="6.8" height="40.55" fill="#3d93e0" stroke="#fff" stroke-width="0.9"/>
<rect x="683.36" y="301.84" width="6.8" height="14.31" fill="#9ac8ef" stroke="#fff" stroke-width="0.9"/>
<rect x="683.36" y="268.45" width="6.8" height="33.39" fill="#c3def6" stroke="#fff" stroke-width="0.9"/>
<rect x="683.36" y="237.75" width="6.8" height="30.70" fill="#fdc643" stroke="#fff" stroke-width="0.9"/>
<rect x="691.49" y="316.15" width="6.8" height="40.55" fill="#3d93e0" stroke="#fff" stroke-width="0.9"/>
<rect x="691.49" y="304.23" width="6.8" height="11.92" fill="#9ac8ef" stroke="#fff" stroke-width="0.9"/>
<rect x="691.49" y="268.45" width="6.8" height="35.78" fill="#c3def6" stroke="#fff" stroke-width="0.9"/>
<rect x="691.49" y="237.75" width="6.8" height="30.70" fill="#fdc643" stroke="#fff" stroke-width="0.9"/>
<rect x="699.62" y="316.15" width="6.8" height="40.55" fill="#3d93e0" stroke="#fff" stroke-width="0.9"/>
<rect x="699.62" y="301.84" width="6.8" height="14.31" fill="#9ac8ef" stroke="#fff" stroke-width="0.9"/>
<rect x="699.62" y="268.45" width="6.8" height="33.39" fill="#c3def6" stroke="#fff" stroke-width="0.9"/>
<rect x="699.62" y="237.75" width="6.8" height="30.70" fill="#fdc643" stroke="#fff" stroke-width="0.9"/>
<rect x="707.75" y="316.15" width="6.8" height="40.55" fill="#3d93e0" stroke="#fff" stroke-width="0.9"/>
<rect x="707.75" y="301.84" width="6.8" height="14.31" fill="#9ac8ef" stroke="#fff" stroke-width="0.9"/>
<rect x="707.75" y="268.45" width="6.8" height="33.39" fill="#c3def6" stroke="#fff" stroke-width="0.9"/>
<rect x="707.75" y="237.75" width="6.8" height="30.70" fill="#fdc643" stroke="#fff" stroke-width="0.9"/>
<rect x="715.88" y="313.77" width="6.8" height="42.93" fill="#3d93e0" stroke="#fff" stroke-width="0.9"/>
<rect x="715.88" y="294.69" width="6.8" height="19.08" fill="#9ac8ef" stroke="#fff" stroke-width="0.9"/>
<rect x="715.88" y="266.07" width="6.8" height="28.62" fill="#c3def6" stroke="#fff" stroke-width="0.9"/>
<rect x="715.88" y="235.37" width="6.8" height="30.70" fill="#fdc643" stroke="#fff" stroke-width="0.9"/>
<rect x="724.01" y="313.77" width="6.8" height="42.93" fill="#3d93e0" stroke="#fff" stroke-width="0.9"/>
<rect x="724.01" y="297.07" width="6.8" height="16.69" fill="#9ac8ef" stroke="#fff" stroke-width="0.9"/>
<rect x="724.01" y="266.07" width="6.8" height="31.00" fill="#c3def6" stroke="#fff" stroke-width="0.9"/>
<rect x="724.01" y="235.37" width="6.8" height="30.70" fill="#fdc643" stroke="#fff" stroke-width="0.9"/>
<rect x="732.14" y="316.15" width="6.8" height="40.55" fill="#3d93e0" stroke="#fff" stroke-width="0.9"/>
<rect x="732.14" y="299.46" width="6.8" height="16.69" fill="#9ac8ef" stroke="#fff" stroke-width="0.9"/>
<rect x="732.14" y="268.45" width="6.8" height="31.00" fill="#c3def6" stroke="#fff" stroke-width="0.9"/>
<rect x="732.14" y="237.75" width="6.8" height="30.70" fill="#fdc643" stroke="#fff" stroke-width="0.9"/>
<rect x="740.27" y="313.77" width="6.8" height="42.93" fill="#3d93e0" stroke="#fff" stroke-width="0.9"/>
<rect x="740.27" y="297.07" width="6.8" height="16.69" fill="#9ac8ef" stroke="#fff" stroke-width="0.9"/>
<rect x="740.27" y="266.07" width="6.8" height="31.00" fill="#c3def6" stroke="#fff" stroke-width="0.9"/>
<rect x="740.27" y="235.37" width="6.8" height="30.70" fill="#fdc643" stroke="#fff" stroke-width="0.9"/>
<rect x="748.40" y="316.15" width="6.8" height="40.55" fill="#3d93e0" stroke="#fff" stroke-width="0.9"/>
<rect x="748.40" y="297.07" width="6.8" height="19.08" fill="#9ac8ef" stroke="#fff" stroke-width="0.9"/>
<rect x="748.40" y="266.07" width="6.8" height="31.00" fill="#c3def6" stroke="#fff" stroke-width="0.9"/>
<rect x="748.40" y="235.37" width="6.8" height="30.70" fill="#fdc643" stroke="#fff" stroke-width="0.9"/>
<rect x="756.53" y="318.54" width="6.8" height="38.16" fill="#3d93e0" stroke="#fff" stroke-width="0.9"/>
<rect x="756.53" y="297.07" width="6.8" height="21.46" fill="#9ac8ef" stroke="#fff" stroke-width="0.9"/>
<rect x="756.53" y="266.07" width="6.8" height="31.00" fill="#c3def6" stroke="#fff" stroke-width="0.9"/>
<rect x="756.53" y="237.75" width="6.8" height="28.32" fill="#fdc643" stroke="#fff" stroke-width="0.9"/>
<rect x="764.66" y="313.77" width="6.8" height="42.93" fill="#3d93e0" stroke="#fff" stroke-width="0.9"/>
<rect x="764.66" y="294.69" width="6.8" height="19.08" fill="#9ac8ef" stroke="#fff" stroke-width="0.9"/>
<rect x="764.66" y="266.07" width="6.8" height="28.62" fill="#c3def6" stroke="#fff" stroke-width="0.9"/>
<rect x="764.66" y="232.98" width="6.8" height="33.09" fill="#fdc643" stroke="#fff" stroke-width="0.9"/>
<rect x="772.79" y="316.15" width="6.8" height="40.55" fill="#3d93e0" stroke="#fff" stroke-width="0.9"/>
<rect x="772.79" y="294.69" width="6.8" height="21.46" fill="#9ac8ef" stroke="#fff" stroke-width="0.9"/>
<rect x="772.79" y="263.69" width="6.8" height="31.00" fill="#c3def6" stroke="#fff" stroke-width="0.9"/>
<rect x="772.79" y="235.37" width="6.8" height="28.32" fill="#fdc643" stroke="#fff" stroke-width="0.9"/>
<rect x="780.92" y="318.54" width="6.8" height="38.16" fill="#3d93e0" stroke="#fff" stroke-width="0.9"/>
<rect x="780.92" y="299.46" width="6.8" height="19.08" fill="#9ac8ef" stroke="#fff" stroke-width="0.9"/>
<rect x="780.92" y="268.45" width="6.8" height="31.00" fill="#c3def6" stroke="#fff" stroke-width="0.9"/>
<rect x="780.92" y="237.75" width="6.8" height="30.70" fill="#fdc643" stroke="#fff" stroke-width="0.9"/>
<rect x="789.05" y="316.15" width="6.8" height="40.55" fill="#3d93e0" stroke="#fff" stroke-width="0.9"/>
<rect x="789.05" y="297.07" width="6.8" height="19.08" fill="#9ac8ef" stroke="#fff" stroke-width="0.9"/>
<rect x="789.05" y="273.23" width="6.8" height="23.85" fill="#c3def6" stroke="#fff" stroke-width="0.9"/>
<rect x="789.05" y="235.37" width="6.8" height="37.86" fill="#fdc643" stroke="#fff" stroke-width="0.9"/>
<rect x="797.18" y="313.77" width="6.8" height="42.93" fill="#3d93e0" stroke="#fff" stroke-width="0.9"/>
<rect x="797.18" y="294.69" width="6.8" height="19.08" fill="#9ac8ef" stroke="#fff" stroke-width="0.9"/>
<rect x="797.18" y="266.07" width="6.8" height="28.62" fill="#c3def6" stroke="#fff" stroke-width="0.9"/>
<rect x="797.18" y="232.98" width="6.8" height="33.09" fill="#fdc643" stroke="#fff" stroke-width="0.9"/>
<rect x="805.31" y="320.93" width="6.8" height="35.77" fill="#3d93e0" stroke="#fff" stroke-width="0.9"/>
<rect x="805.31" y="301.84" width="6.8" height="19.08" fill="#9ac8ef" stroke="#fff" stroke-width="0.9"/>
<rect x="805.31" y="275.61" width="6.8" height="26.23" fill="#c3def6" stroke="#fff" stroke-width="0.9"/>
<rect x="805.31" y="240.13" width="6.8" height="35.48" fill="#fdc643" stroke="#fff" stroke-width="0.9"/>
<rect x="813.44" y="313.77" width="6.8" height="42.93" fill="#3d93e0" stroke="#fff" stroke-width="0.9"/>
<rect x="813.44" y="294.69" width="6.8" height="19.08" fill="#9ac8ef" stroke="#fff" stroke-width="0.9"/>
<rect x="813.44" y="270.84" width="6.8" height="23.85" fill="#c3def6" stroke="#fff" stroke-width="0.9"/>
<rect x="813.44" y="232.98" width="6.8" height="37.86" fill="#fdc643" stroke="#fff" stroke-width="0.9"/>
<rect x="821.57" y="318.54" width="6.8" height="38.16" fill="#3d93e0" stroke="#fff" stroke-width="0.9"/>
<rect x="821.57" y="299.46" width="6.8" height="19.08" fill="#9ac8ef" stroke="#fff" stroke-width="0.9"/>
<rect x="821.57" y="270.84" width="6.8" height="28.62" fill="#c3def6" stroke="#fff" stroke-width="0.9"/>
<rect x="821.57" y="237.75" width="6.8" height="33.09" fill="#fdc643" stroke="#fff" stroke-width="0.9"/>
<text x="346.3" y="364.9" transform="rotate(-45 346.3 364.9)" text-anchor="end" font-size="6" fill="#707070" stroke="#707070" stroke-width="0.12">nov. 15</text>
<text x="362.6" y="364.9" transform="rotate(-45 362.6 364.9)" text-anchor="end" font-size="6" fill="#707070" stroke="#707070" stroke-width="0.12">nov. 17</text>
<text x="378.8" y="364.9" transform="rotate(-45 378.8 364.9)" text-anchor="end" font-size="6" fill="#707070" stroke="#707070" stroke-width="0.12">nov. 19</text>
<text x="395.1" y="364.9" transform="rotate(-45 395.1 364.9)" text-anchor="end" font-size="6" fill="#707070" stroke="#707070" stroke-width="0.12">nov. 21</text>
<text x="411.3" y="364.9" transform="rotate(-45 411.3 364.9)" text-anchor="end" font-size="6" fill="#707070" stroke="#707070" stroke-width="0.12">nov. 23</text>
<text x="427.6" y="364.9" transform="rotate(-45 427.6 364.9)" text-anchor="end" font-size="6" fill="#707070" stroke="#707070" stroke-width="0.12">nov. 25</text>
<text x="443.9" y="364.9" transform="rotate(-45 443.9 364.9)" text-anchor="end" font-size="6" fill="#707070" stroke="#707070" stroke-width="0.12">nov. 27</text>
<text x="460.1" y="364.9" transform="rotate(-45 460.1 364.9)" text-anchor="end" font-size="6" fill="#707070" stroke="#707070" stroke-width="0.12">nov. 29</text>
<text x="476.4" y="364.9" transform="rotate(-45 476.4 364.9)" text-anchor="end" font-size="6" fill="#707070" stroke="#707070" stroke-width="0.12">déc. 1</text>
<text x="492.6" y="364.9" transform="rotate(-45 492.6 364.9)" text-anchor="end" font-size="6" fill="#707070" stroke="#707070" stroke-width="0.12">déc. 3</text>
<text x="508.9" y="364.9" transform="rotate(-45 508.9 364.9)" text-anchor="end" font-size="6" fill="#707070" stroke="#707070" stroke-width="0.12">déc. 5</text>
<text x="525.2" y="364.9" transform="rotate(-45 525.2 364.9)" text-anchor="end" font-size="6" fill="#707070" stroke="#707070" stroke-width="0.12">déc. 7</text>
<text x="541.4" y="364.9" transform="rotate(-45 541.4 364.9)" text-anchor="end" font-size="6" fill="#707070" stroke="#707070" stroke-width="0.12">déc. 9</text>
<text x="557.7" y="364.9" transform="rotate(-45 557.7 364.9)" text-anchor="end" font-size="6" fill="#707070" stroke="#707070" stroke-width="0.12">déc. 11</text>
<text x="573.9" y="364.9" transform="rotate(-45 573.9 364.9)" text-anchor="end" font-size="6" fill="#707070" stroke="#707070" stroke-width="0.12">déc. 13</text>
<text x="590.2" y="364.9" transform="rotate(-45 590.2 364.9)" text-anchor="end" font-size="6" fill="#707070" stroke="#707070" stroke-width="0.12">déc. 15</text>
<text x="606.5" y="364.9" transform="rotate(-45 606.5 364.9)" text-anchor="end" font-size="6" fill="#707070" stroke="#707070" stroke-width="0.12">déc. 17</text>
<text x="622.7" y="364.9" transform="rotate(-45 622.7 364.9)" text-anchor="end" font-size="6" fill="#707070" stroke="#707070" stroke-width="0.12">déc. 19</text>
<text x="639.0" y="364.9" transform="rotate(-45 639.0 364.9)" text-anchor="end" font-size="6" fill="#707070" stroke="#707070" stroke-width="0.12">déc. 21</text>
<text x="655.2" y="364.9" transform="rotate(-45 655.2 364.9)" text-anchor="end" font-size="6" fill="#707070" stroke="#707070" stroke-width="0.12">déc. 23</text>
<text x="671.5" y="364.9" transform="rotate(-45 671.5 364.9)" text-anchor="end" font-size="6" fill="#707070" stroke="#707070" stroke-width="0.12">déc. 25</text>
<text x="687.8" y="364.9" transform="rotate(-45 687.8 364.9)" text-anchor="end" font-size="6" fill="#707070" stroke="#707070" stroke-width="0.12">déc. 27</text>
<text x="704.0" y="364.9" transform="rotate(-45 704.0 364.9)" text-anchor="end" font-size="6" fill="#707070" stroke="#707070" stroke-width="0.12">déc. 29</text>
<text x="720.3" y="364.9" transform="rotate(-45 720.3 364.9)" text-anchor="end" font-size="6" fill="#707070" stroke="#707070" stroke-width="0.12">déc. 31</text>
<text x="736.5" y="364.9" transform="rotate(-45 736.5 364.9)" text-anchor="end" font-size="6" fill="#707070" stroke="#707070" stroke-width="0.12">janv. 2</text>
<text x="752.8" y="364.9" transform="rotate(-45 752.8 364.9)" text-anchor="end" font-size="6" fill="#707070" stroke="#707070" stroke-width="0.12">janv. 4</text>
<text x="769.1" y="364.9" transform="rotate(-45 769.1 364.9)" text-anchor="end" font-size="6" fill="#707070" stroke="#707070" stroke-width="0.12">janv. 6</text>
<text x="785.3" y="364.9" transform="rotate(-45 785.3 364.9)" text-anchor="end" font-size="6" fill="#707070" stroke="#707070" stroke-width="0.12">janv. 8</text>
<text x="801.6" y="364.9" transform="rotate(-45 801.6 364.9)" text-anchor="end" font-size="6" fill="#707070" stroke="#707070" stroke-width="0.12">janv. 10</text>
<text x="817.8" y="364.9" transform="rotate(-45 817.8 364.9)" text-anchor="end" font-size="6" fill="#707070" stroke="#707070" stroke-width="0.12">janv. 12</text>
<text transform="translate(322.2 284) rotate(-90)" text-anchor="middle" font-size="6.2" fill="#666">Mots clés</text>
<rect x="319.8" y="388.5" width="5.8" height="5.8" rx="0.8" fill="#f8bf35"/><path d="M321.1,391.5 L322.3,392.7 L324.40000000000003,390.1" fill="none" stroke="#fff" stroke-width="0.9"/>
<rect x="361.1" y="388.8" width="5.8" height="5.8" rx="0.8" fill="#bfdbf5"/><path d="M362.40000000000003,391.8 L363.6,393.0 L365.70000000000005,390.40000000000003" fill="none" stroke="#fff" stroke-width="0.9"/>
<rect x="405.5" y="388.8" width="5.8" height="5.8" rx="0.8" fill="#7db8ea"/><path d="M406.8,391.8 L408.0,393.0 L410.1,390.40000000000003" fill="none" stroke="#fff" stroke-width="0.9"/>
<rect x="454.4" y="388.8" width="5.8" height="5.8" rx="0.8" fill="#2b82d3"/><path d="M455.7,391.8 L456.9,393.0 L459.0,390.40000000000003" fill="none" stroke="#fff" stroke-width="0.9"/>
<rect x="507.7" y="389.2" width="5.2" height="5.2" rx="0.8" fill="#fff" stroke="#c8c8c8" stroke-width="0.8"/>
<circle cx="836" cy="407" r="14.2" fill="#ff632b" stroke="#ff8a5c" stroke-width="0.8"/><path d="M831.2,399.8 h9.8 a2.4,2.4 0 0 1 2.4,2.4 v13.2 l-3.4,-2.2 h-8.8 a2.4,2.4 0 0 1 -2.4,-2.4 v-8.6 a2.4,2.4 0 0 1 2.4,-2.4 z" fill="#fff"/><path d="M832.6,409 Q836,411.4 839.6,409" fill="none" stroke="#ff632b" stroke-width="1.1"/>
</svg>
<span id="t0" class="t" style="left:15.80px;top:7.87px;font-size:7px;font-weight:400;color:#555;transform:scaleX(0.8503);-webkit-text-stroke:0.15px currentColor;">Tableau de bord</span>
<span id="t1" class="t" style="left:70.50px;top:7.87px;font-size:7px;font-weight:400;color:#555;transform:scaleX(0.8671);-webkit-text-stroke:0.15px currentColor;">Projets</span>
<span id="t2" class="t" style="left:136.20px;top:7.87px;font-size:7px;font-weight:400;color:#333;transform:scaleX(0.8591);-webkit-text-stroke:0.15px currentColor;">Suivi de position</span>
<span id="t3" class="t" style="left:16.00px;top:22.56px;font-size:16px;font-weight:400;color:#161616;transform:scaleX(1.0532);-webkit-text-stroke:0.25px currentColor;-webkit-text-stroke:0.5px currentColor;">Position Tracking:</span>
<span id="t4" class="t" style="left:22.70px;top:44.12px;font-size:6px;font-weight:400;color:#2f78c4;transform:scaleX(0.9580);-webkit-text-stroke:0.08px currentColor;">France • French</span>
<span id="t5" class="t" style="left:85.50px;top:44.12px;font-size:6px;font-weight:400;color:#333;transform:scaleX(0.9609);-webkit-text-stroke:0.08px currentColor;">Mis à jour : il y a 8 heures</span>
<span id="t6" class="t" style="left:165.10px;top:44.12px;font-size:6px;font-weight:400;color:#333;transform:scaleX(0.9749);-webkit-text-stroke:0.08px currentColor;">Mots clés : <span style="color:#3b82c9">65</span></span>
<span id="t7" class="t" style="left:215.10px;top:44.12px;font-size:6px;font-weight:400;color:#333;transform:scaleX(0.9749);-webkit-text-stroke:0.08px currentColor;">Concurrents : <span style="color:#3b82c9">7</span></span>
<span id="t8" class="t" style="left:269.50px;top:44.12px;font-size:6px;font-weight:400;color:#333;transform:scaleX(0.9903);-webkit-text-stroke:0.08px currentColor;">Type : <span style="color:#2f78c4">Organique</span></span>
<span id="t9" class="t" style="left:335.00px;top:44.12px;font-size:6px;font-weight:400;color:#333;transform:scaleX(0.9585);-webkit-text-stroke:0.08px currentColor;">Google 3-pack :</span>
<span id="t10" class="t" style="left:620.70px;top:8.75px;font-size:6.2px;font-weight:400;color:#2a619f;transform:scaleX(0.9745);-webkit-text-stroke:0.08px currentColor;">Position Tracking App</span>
<span id="t11" class="t" style="left:696.60px;top:8.75px;font-size:6.2px;font-weight:400;color:#2a619f;transform:scaleX(0.9957);-webkit-text-stroke:0.08px currentColor;">Manuel de l'utilisateur</span>
<span id="t12" class="t" style="left:774.00px;top:8.75px;font-size:6.2px;font-weight:400;color:#2a619f;transform:scaleX(0.9575);-webkit-text-stroke:0.08px currentColor;">Envoyer des commentaires</span>
<span id="t13" class="t" style="left:717.50px;top:26.00px;font-size:6.5px;font-weight:400;color:#333;transform:scaleX(0.8901);-webkit-text-stroke:0.15px currentColor;">Google Data Studio</span>
<span id="t14" class="t" style="left:781.50px;top:26.00px;font-size:6.5px;font-weight:400;color:#333;transform:scaleX(0.8846);-webkit-text-stroke:0.15px currentColor;">PDF</span>
<span id="t15" class="t" style="left:21.00px;top:64.33px;font-size:8px;font-weight:700;color:#2563a6;transform:scaleX(0.8200);">Aperçu</span>
<span id="t16" class="t" style="left:54.40px;top:64.33px;font-size:8px;font-weight:400;color:#333;transform:scaleX(0.8865);-webkit-text-stroke:0.25px currentColor;">Vue d’ensemble</span>
<span id="t17" class="t" style="left:116.60px;top:64.33px;font-size:8px;font-weight:400;color:#333;transform:scaleX(0.8984);-webkit-text-stroke:0.25px currentColor;">Répartition du classement</span>
<span id="t18" class="t" style="left:211.00px;top:64.33px;font-size:8px;font-weight:400;color:#333;transform:scaleX(0.8965);-webkit-text-stroke:0.25px currentColor;">Pages de destination</span>
<span id="t19" class="t" style="left:288.70px;top:64.33px;font-size:8px;font-weight:400;color:#333;transform:scaleX(0.9012);-webkit-text-stroke:0.25px currentColor;">Cannibalization</span>
<span id="t20" class="t" style="left:349.70px;top:64.33px;font-size:8px;font-weight:400;color:#333;transform:scaleX(0.8924);-webkit-text-stroke:0.25px currentColor;">Découverte des concurrents</span>
<span id="t21" class="t" style="left:450.00px;top:64.33px;font-size:8px;font-weight:400;color:#333;transform:scaleX(0.9274);-webkit-text-stroke:0.25px currentColor;">Appareils et lieux</span>
<span id="t22" class="t" style="left:517.00px;top:64.33px;font-size:8px;font-weight:400;color:#333;transform:scaleX(0.8947);-webkit-text-stroke:0.25px currentColor;">Featured snippets</span>
<span id="t23" class="t" style="left:19.80px;top:91.60px;font-size:6.5px;font-weight:400;color:#333;transform:scaleX(0.9654);-webkit-text-stroke:0.15px currentColor;">tubflex.com</span>
<span id="t24" class="t" style="left:710.00px;top:90.97px;font-size:6.3px;font-weight:400;color:#333;transform:scaleX(0.9201);-webkit-text-stroke:0.08px currentColor;">nov. 15, 2020 – janv. 13, 2021</span>
<span id="t25" class="t" style="left:791.40px;top:90.97px;font-size:6.3px;font-weight:400;color:#999;transform:scaleX(0.9470);-webkit-text-stroke:0.08px currentColor;">(60 derniers jours)</span>
<span id="t26" class="t" style="left:27.80px;top:132.17px;font-size:7px;font-weight:400;color:#444;transform:scaleX(1.0445);-webkit-text-stroke:0.15px currentColor;">Visibilité</span>
<span id="t27" class="t" style="left:28.60px;top:142.77px;font-size:11.5px;font-weight:700;color:#1f73c4;transform:scaleX(1.0406);">16.38%</span>
<span id="t28" class="t" style="left:74.40px;top:147.84px;font-size:5.5px;font-weight:400;color:#5aa84e;transform:scaleX(1.0312);">+2.81%</span>
<span id="t29" class="t" style="left:310.50px;top:132.17px;font-size:7px;font-weight:400;color:#444;transform:scaleX(1.0280);-webkit-text-stroke:0.15px currentColor;">Estimation de trafic</span>
<span id="t30" class="t" style="left:311.30px;top:142.77px;font-size:11.5px;font-weight:700;color:#1f73c4;transform:scaleX(1.0138);">1.36</span>
<span id="t31" class="t" style="left:338.70px;top:147.84px;font-size:5.5px;font-weight:400;color:#5aa84e;transform:scaleX(1.0128);">+0.14</span>
<span id="t32" class="t" style="left:587.50px;top:132.17px;font-size:7px;font-weight:400;color:#444;transform:scaleX(0.9936);-webkit-text-stroke:0.15px currentColor;">Position moyenne</span>
<span id="t33" class="t" style="left:587.80px;top:142.77px;font-size:11.5px;font-weight:700;color:#1f73c4;transform:scaleX(1.0180);">39.89</span>
<span id="t34" class="t" style="left:622.40px;top:147.84px;font-size:5.5px;font-weight:400;color:#5aa84e;transform:scaleX(1.1636);">+0.74</span>
<span id="t35" class="t" style="left:28.00px;top:191.08px;font-size:9px;font-weight:400;color:#222;transform:scaleX(1.0575);-webkit-text-stroke:0.25px currentColor;-webkit-text-stroke:0.4px currentColor;">Mots clés</span>
<span id="t36" class="t" style="left:28.00px;top:211.24px;font-size:6.8px;font-weight:400;color:#333;transform:scaleX(0.9495);-webkit-text-stroke:0.15px currentColor;">Top 3</span>
<span id="t37" class="t" style="left:44.40px;top:225.27px;font-size:11.5px;font-weight:700;color:#1f73c4;transform:scaleX(0.9534);">14</span>
<span id="t38" class="t" style="left:61.10px;top:223.47px;font-size:5px;font-weight:400;color:#333;transform:scaleX(1.0098);">nouveaux</span>
<span id="t39" class="t" style="left:86.80px;top:223.47px;font-size:5px;font-weight:400;color:#333;transform:scaleX(0.9675);">perdus</span>
<span id="t40" class="t" style="left:61.30px;top:230.97px;font-size:5px;font-weight:400;color:#4aa63c;">2</span>
<span id="t41" class="t" style="left:87.30px;top:230.97px;font-size:5px;font-weight:400;color:#d9363e;">1</span>
<span id="t42" class="t" style="left:28.00px;top:252.84px;font-size:6.8px;font-weight:400;color:#333;transform:scaleX(0.9549);-webkit-text-stroke:0.15px currentColor;">Top 10</span>
<span id="t43" class="t" style="left:44.40px;top:266.87px;font-size:11.5px;font-weight:700;color:#1f73c4;transform:scaleX(0.9534);">26</span>
<span id="t44" class="t" style="left:61.10px;top:265.07px;font-size:5px;font-weight:400;color:#333;transform:scaleX(1.0098);">nouveaux</span>
<span id="t45" class="t" style="left:86.80px;top:265.07px;font-size:5px;font-weight:400;color:#333;transform:scaleX(0.9675);">perdus</span>
<span id="t46" class="t" style="left:61.30px;top:272.57px;font-size:5px;font-weight:400;color:#4aa63c;">1</span>
<span id="t47" class="t" style="left:87.30px;top:272.57px;font-size:5px;font-weight:400;color:#d9363e;">1</span>
<span id="t48" class="t" style="left:28.00px;top:294.34px;font-size:6.8px;font-weight:400;color:#333;transform:scaleX(0.9549);-webkit-text-stroke:0.15px currentColor;">Top 20</span>
<span id="t49" class="t" style="left:44.40px;top:308.37px;font-size:11.5px;font-weight:700;color:#1f73c4;transform:scaleX(0.9534);">34</span>
<span id="t50" class="t" style="left:61.10px;top:306.57px;font-size:5px;font-weight:400;color:#333;transform:scaleX(1.0098);">nouveaux</span>
<span id="t51" class="t" style="left:86.80px;top:306.57px;font-size:5px;font-weight:400;color:#333;transform:scaleX(0.9675);">perdus</span>
<span id="t52" class="t" style="left:61.30px;top:314.07px;font-size:5px;font-weight:400;color:#4aa63c;">3</span>
<span id="t53" class="t" style="left:87.30px;top:314.07px;font-size:5px;font-weight:400;color:#333;">0</span>
<span id="t54" class="t" style="left:28.00px;top:336.44px;font-size:6.8px;font-weight:400;color:#333;transform:scaleX(0.9509);-webkit-text-stroke:0.15px currentColor;">Top 100</span>
<span id="t55" class="t" style="left:44.40px;top:350.47px;font-size:11.5px;font-weight:700;color:#1f73c4;transform:scaleX(0.9534);">50</span>
<span id="t56" class="t" style="left:61.10px;top:348.67px;font-size:5px;font-weight:400;color:#333;transform:scaleX(1.0098);">nouveaux</span>
<span id="t57" class="t" style="left:86.80px;top:348.67px;font-size:5px;font-weight:400;color:#333;transform:scaleX(0.9675);">perdus</span>
<span id="t58" class="t" style="left:61.30px;top:356.17px;font-size:5px;font-weight:400;color:#4aa63c;">1</span>
<span id="t59" class="t" style="left:87.30px;top:356.17px;font-size:5px;font-weight:400;color:#d9363e;">3</span>
<span id="t60" class="t" style="left:27.80px;top:378.64px;font-size:6.8px;font-weight:400;color:#333;transform:scaleX(1.0063);-webkit-text-stroke:0.15px currentColor;">En progression vs. en régression</span>
<span id="t61" class="t" style="left:28.40px;top:392.09px;font-size:11px;font-weight:700;color:#2e9a35;transform:scaleX(1.0204);">23</span>
<span id="t62" class="t" style="left:67.60px;top:392.09px;font-size:11px;font-weight:700;color:#d0212a;transform:scaleX(1.0694);">17</span>
<span id="t63" class="t" style="left:310.80px;top:191.48px;font-size:9px;font-weight:400;color:#222;transform:scaleX(1.0897);-webkit-text-stroke:0.25px currentColor;-webkit-text-stroke:0.4px currentColor;">Répartition du classement</span>
<span id="t64" class="t" style="left:330.90px;top:355.29px;font-size:5.8px;font-weight:400;color:#666;transform:scaleX(1.0203);">0</span>
<span id="t65" class="t" style="left:327.20px;top:331.44px;font-size:5.8px;font-weight:400;color:#666;transform:scaleX(1.0847);">10</span>
<span id="t66" class="t" style="left:327.20px;top:307.59px;font-size:5.8px;font-weight:400;color:#666;transform:scaleX(1.0847);">20</span>
<span id="t67" class="t" style="left:327.20px;top:283.74px;font-size:5.8px;font-weight:400;color:#666;transform:scaleX(1.0847);">30</span>
<span id="t68" class="t" style="left:327.20px;top:259.89px;font-size:5.8px;font-weight:400;color:#666;transform:scaleX(1.0847);">40</span>
<span id="t69" class="t" style="left:327.20px;top:236.04px;font-size:5.8px;font-weight:400;color:#666;transform:scaleX(1.0847);">50</span>
<span id="t70" class="t" style="left:327.20px;top:212.19px;font-size:5.8px;font-weight:400;color:#666;transform:scaleX(1.0847);">60</span>
<span id="t71" class="t" style="left:328.90px;top:390.24px;font-size:6.8px;font-weight:400;color:#333;transform:scaleX(1.1226);-webkit-text-stroke:0.15px currentColor;-webkit-text-stroke:0.32px currentColor;"># 1-3</span>
<span id="t72" class="t" style="left:370.20px;top:390.24px;font-size:6.8px;font-weight:400;color:#333;transform:scaleX(1.0736);-webkit-text-stroke:0.15px currentColor;-webkit-text-stroke:0.32px currentColor;"># 4-10</span>
<span id="t73" class="t" style="left:415.00px;top:390.24px;font-size:6.8px;font-weight:400;color:#333;transform:scaleX(1.1524);-webkit-text-stroke:0.15px currentColor;-webkit-text-stroke:0.32px currentColor;"># 11-20</span>
<span id="t74" class="t" style="left:463.90px;top:390.24px;font-size:6.8px;font-weight:400;color:#333;transform:scaleX(1.0803);-webkit-text-stroke:0.15px currentColor;-webkit-text-stroke:0.32px currentColor;"># 21-100</span>
<span id="t75" class="t" style="left:517.10px;top:390.24px;font-size:6.8px;font-weight:400;color:#bbb;transform:scaleX(1.0150);-webkit-text-stroke:0.15px currentColor;">Hors du top 100</span>
</div></body></html>
